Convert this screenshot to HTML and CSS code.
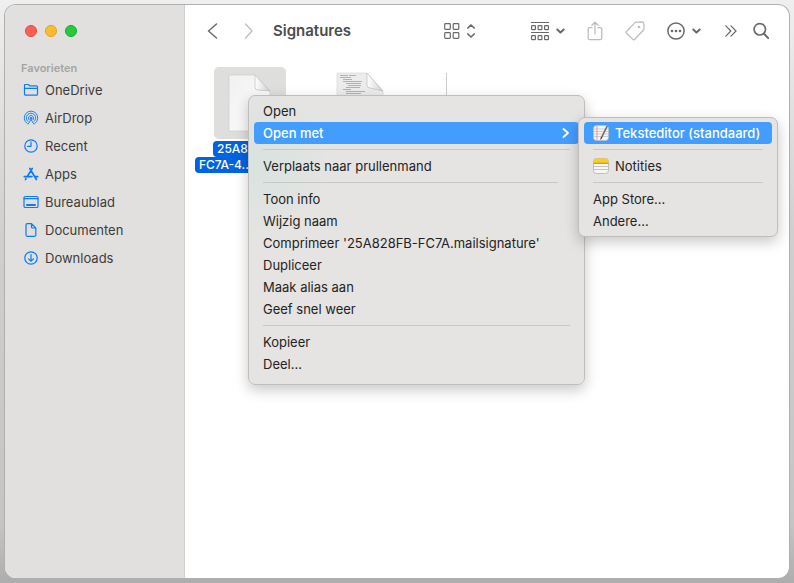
FILE: index.html
```html
<!DOCTYPE html>
<html lang="nl">
<head>
    <meta charset="UTF-8">
    <meta name="viewport" content="width=device-width, initial-scale=1.0">
    <title>Signatures</title>
    <link rel="stylesheet" href="styles.css">
</head>
<body>
    <div class="window">
        <aside class="sidebar">
            <div class="traffic-lights">
                <button class="light close" aria-label="Sluit"></button>
                <button class="light minimize" aria-label="Minimaliseer"></button>
                <button class="light zoom" aria-label="Vergroot"></button>
            </div>
            <h2 class="sidebar-title">Favorieten</h2>
            <nav class="sidebar-list">
                <a class="sidebar-item" href="#onedrive">
                    <svg class="sidebar-icon" viewBox="0 0 16 16"><path d="M1.5 12.2V3.5q0-1 1-1h3l1.2 1.3h6.8q1 0 1 1v7.4q0 1-1 1h-11q-1 0-1-1zM1.5 6.3h13"/></svg>
                    OneDrive
                </a>
                <a class="sidebar-item" href="#airdrop">
                    <svg class="sidebar-icon thin" viewBox="0 0 16 16"><path d="M4.2 13.6A6.8 6.8 0 1 1 11.8 13.600M4.900 11.500A4.700 4.700 0 1 1 11.100 11.500M6 9.800A2.600 2.600 0 1 1 10 9.800"/><circle class="solid" cx="8" cy="8.200" r=".8"/><path d="M8 9.500l-2.800 4.500M8 9.500l2.800 4.500"/></svg>
                    AirDrop
                </a>
                <a class="sidebar-item" href="#recent">
                    <svg class="sidebar-icon" viewBox="0 0 16 16"><circle cx="8" cy="8" r="6.2"/><path d="M8 3.8V8.3H4.6"/></svg>
                    Recent
                </a>
                <a class="sidebar-item" href="#apps">
                    <svg class="sidebar-icon bold" viewBox="0 0 16 16"><path d="M9.2 2.5L4.2 10.6M6.8 2.5l6.6 11M1.3 10.6h7.6M11.8 10.6h2.9M3 12.7l-.5.9"/></svg>
                    Apps
                </a>
                <a class="sidebar-item" href="#bureaublad">
                    <svg class="sidebar-icon" viewBox="0 0 16 16"><rect x="1" y="2.5" width="14" height="11" rx="1.3"/><path d="M1 4.7h14"/><path class="thick" d="M4 11h8"/></svg>
                    Bureaublad
                </a>
                <a class="sidebar-item" href="#documenten">
                    <svg class="sidebar-icon" viewBox="0 0 16 16"><path d="M8.5 1.7H4.2q-1.2 0-1.2 1.2v10.2q0 1.2 1.2 1.2h7.4q1.2 0 1.2-1.2V6zM8.5 1.7V5q0 1 1 1h3.3"/></svg>
                    Documenten
                </a>
                <a class="sidebar-item" href="#downloads">
                    <svg class="sidebar-icon" viewBox="0 0 16 16"><circle cx="8" cy="8" r="6.2"/><path d="M8 4.5v6.6M5.6 8.9L8 11.2l2.4-2.3"/></svg>
                    Downloads
                </a>
            </nav>
        </aside>

        <main class="content">
            <header class="toolbar">
                <button class="tool" aria-label="Vorige">
                    <svg width="12" height="18" viewBox="0 0 12 18"><path d="M9.5 2L1.5 9l8 7"/></svg>
                </button>
                <button class="tool next dim" aria-label="Volgende">
                    <svg width="12" height="18" viewBox="0 0 12 18"><path d="M2.500 2l6.500 7-6.500 7"/></svg>
                </button>
                <h1 class="title">Signatures</h1>
                <div class="tools">
                    <button class="tool view" aria-label="Weergave">
                        <svg width="16" height="18" viewBox="0 0 16 18"><g class="fine"><rect x=".7" y="1.7" width="5.6" height="5.6" rx=".8"/><rect x="9.2" y="1.7" width="5.6" height="5.6" rx=".8"/><rect x=".7" y="10.7" width="5.6" height="5.6" rx=".8"/><rect x="9.2" y="10.7" width="5.6" height="5.6" rx=".8"/></g></svg>
                        <svg width="8" height="18" viewBox="0 0 8 18"><path class="medium" d="M.8 6L4 3l3.2 3M.8 12L4 15l3.2-3"/></svg>
                    </button>
                    <button class="tool" aria-label="Groepeer">
                        <svg width="18" height="20" viewBox="0 0 18 20"><g class="fine"><path d="M0 1.5h18M0 11.5h18"/><rect x=".6" y="4.6" width="3.8" height="4" rx=".7"/><rect x="7.1" y="4.6" width="3.8" height="4" rx=".7"/><rect x="13.6" y="4.6" width="3.8" height="4" rx=".7"/><rect x=".6" y="14.6" width="3.8" height="4" rx=".7"/><rect x="7.1" y="14.6" width="3.8" height="4" rx=".7"/><rect x="13.6" y="14.6" width="3.8" height="4" rx=".7"/></g></svg>
                        <svg width="9" height="8" viewBox="0 0 9 8"><path class="strong" d="M1.3 2.5l3.2 3 3.2-3"/></svg>
                    </button>
                    <button class="tool dim" aria-label="Deel">
                        <svg width="16" height="20" viewBox="0 0 16 20"><path d="M5 6.7H2.7q-1.5 0-1.5 1.5v9q0 1.5 1.5 1.5h10.6q1.5 0 1.5-1.5v-9q0-1.5-1.5-1.5H11M8 13V1.3M4.9 4.3L8 1.2l3.1 3.1"/></svg>
                    </button>
                    <button class="tool dim" aria-label="Tags">
                        <svg width="20" height="20" viewBox="0 0 20 20"><path d="M11.2 1.2L17 .9q1.8 0 1.9 1.8l.1 5q0 .9-.7 1.6l-8.5 9q-1 1.1-2 .1L1.7 12.3q-1.1-1.1 0-2.1L9.8 1.9q.6-.7 1.4-.7z"/><circle cx="14" cy="6" r=".7"/></svg>
                    </button>
                    <button class="tool" aria-label="Acties">
                        <svg width="18" height="18" viewBox="0 0 18 18"><circle cx="9" cy="9" r="8.1"/><g class="dots"><circle cx="5" cy="9" r="1.3"/><circle cx="9" cy="9" r="1.3"/><circle cx="13" cy="9" r="1.3"/></g></svg>
                        <svg width="9" height="8" viewBox="0 0 9 8"><path class="strong" d="M1.3 2.5l3.2 3 3.2-3"/></svg>
                    </button>
                    <button class="tool more" aria-label="Meer">
                        <svg width="12" height="12" viewBox="0 0 12 12"><path class="fine" d="M.8.8L5.8 6l-5 5.2M6 .8L11 6l-5 5.2"/></svg>
                    </button>
                    <button class="tool" aria-label="Zoek">
                        <svg width="16" height="18" viewBox="0 0 16 18"><circle class="medium" cx="6.8" cy="7.3" r="5.7"/><path class="strong" d="M11 11.7l4.2 4.4"/></svg>
                    </button>
                </div>
            </header>

            <div class="files">
                <div class="file selected">
                    <div class="thumb">
                        <svg width="44" height="60" viewBox="0 0 44 60">
                            <defs>
                                <linearGradient id="page" x2="1" y2="1"><stop offset="0" stop-color="#f1f1f1"/><stop offset="1" stop-color="#fdfdfd"/></linearGradient>
                                <linearGradient id="fold" x2="1"><stop offset="0" stop-color="#fff"/><stop offset="1" stop-color="#d0d0d0"/></linearGradient>
                            </defs>
                            <path fill="url(#page)" stroke="#c8c8c8" stroke-width=".6" d="M1 2h26l15 16v40H1z"/>
                            <path fill="url(#fold)" stroke="#bdbdbd" stroke-width=".7" d="M27 2v12q0 3 3 3l12 1z"/>
                        </svg>
                    </div>
                    <div class="label">
                        <span class="line">25A828</span>
                        <span class="line wide">FC7A-4...</span>
                    </div>
                </div>
                <div class="file">
                    <div class="thumb">
                        <svg width="48" height="64" viewBox="0 0 48 64">
                            <path fill="#ececec" stroke="#d4d4d4" stroke-width=".6" d="M1 2h30l16 18v42H1z"/>
                            <g stroke="#a2a2a2" stroke-width=".8">
                                <path d="M4 4.5h8m1 0h7M4 6.5h11M7 8.5h9M7 10.5h19M10 12.5h15M12 14.5h13M10 16.5h14M7 18.5h8M10 20.5h19M10 22.5h15"/>
                            </g>
                            <path fill="url(#fold)" stroke="#bdbdbd" stroke-width=".7" d="M31 2v12q0 3 3 3l13 3z"/>
                        </svg>
                    </div>
                </div>
                <div class="file">
                    <div class="thumb">
                        <svg width="48" height="64" viewBox="0 0 48 64"><path stroke="#ccc" d="M.5 2v60"/></svg>
                    </div>
                </div>
            </div>
        </main>
    </div>

    <!-- contextmenu -->
    <ul class="menu context-menu">
        <li><button class="menu-item">Open</button></li>
        <li class="has-submenu">
            <button class="menu-item active">Open met
                <svg class="arrow" width="8" height="12" viewBox="0 0 8 12"><path d="M1.5 2L6 6l-4.500 4"/></svg>
            </button>
            <ul class="menu submenu">
                <li><button class="menu-item active">
                    <svg class="app-icon" viewBox="0 0 16 16"><rect x=".5" y=".5" width="15" height="15" rx="3" fill="#f5f5f5" stroke="#bbb" stroke-width=".6"/><path d="M1 4h14M1 6.5h14M1 9h14M1 11.5h14" stroke="#b5b5b5" stroke-width=".6"/><path d="M4 1v14" stroke="#f08078" stroke-width=".8"/><path d="M14.200 1L8.300 13" stroke="#6a6a6a" stroke-width="1.6"/><path d="M8.5 12.200L7.700 14.500" stroke="#222"/></svg>
                    Teksteditor (standaard)
                </button></li>
                <li class="separator"></li>
                <li><button class="menu-item">
                    <svg class="app-icon" viewBox="0 0 16 16"><rect x=".5" y=".5" width="15" height="15" rx="3" fill="#f6f6f4" stroke="#aaa" stroke-width=".7"/><path d="M.5 5V3.5q0-3 3-3h9q3 0 3 3V5z" fill="#fbcb26"/><path d="M.5 5.3h15" stroke="#b98a0c"/><path d="M1 8.5h14M1 11.5h14" stroke="#b5b5bb" stroke-width=".8"/></svg>
                    Notities
                </button></li>
                <li class="separator"></li>
                <li><button class="menu-item">App Store...</button></li>
                <li><button class="menu-item">Andere...</button></li>
            </ul>
        </li>
        <li class="separator"></li>
        <li><button class="menu-item">Verplaats naar prullenmand</button></li>
        <li class="separator short"></li>
        <li><button class="menu-item">Toon info</button></li>
        <li><button class="menu-item">Wijzig naam</button></li>
        <li><button class="menu-item">Comprimeer '25A828FB-FC7A.mailsignature'</button></li>
        <li><button class="menu-item">Dupliceer</button></li>
        <li><button class="menu-item">Maak alias aan</button></li>
        <li><button class="menu-item">Geef snel weer</button></li>
        <li class="separator"></li>
        <li><button class="menu-item">Kopieer</button></li>
        <li><button class="menu-item">Deel...</button></li>
    </ul>
</body>
</html>
```
FILE: styles.css
```css
* {
    margin: 0;
    padding: 0;
    box-sizing: border-box;
}

body {
    position: relative;
    display: flex;
    min-height: 100vh;
    padding: 5px;
    font-family: Inter, "Liberation Sans", sans-serif;
    font-size: 13px;
    line-height: 16px;
    color: #232323;
    background: linear-gradient(#efefef 0%, #cfcfcf 40%, #c4c4c4 90%, #adadad 100%);
}

button {
    font: inherit;
    color: inherit;
    background: none;
    border: none;
}

.window {
    display: flex;
    flex: 1;
    overflow: hidden;
    background: white;
    border-radius: 11px;
    box-shadow: 0 0 0 1px #b0b0b0;
}

/* zijbalk */
.sidebar {
    width: 180px;
    flex-shrink: 0;
    padding: 20px 8px;
    background: #e1e0de;
    border-right: 1px solid #d0cfcd;
}

.traffic-lights {
    display: flex;
    gap: 8px;
    padding-left: 12px;
}

.light {
    width: 12px;
    height: 12px;
    border-radius: 50%;
}

.close {
    background: #ff5f57;
    border: 1px solid #e2463f;
}

.minimize {
    background: #febc2e;
    border: 1px solid #e1a116;
}

.zoom {
    background: #28c840;
    border: 1px solid #12ac28;
}

.sidebar-title {
    margin-top: 23px;
    padding-left: 8px;
    font-size: 11px;
    font-weight: 600;
    color: #a5a4a2;
}

.sidebar-item {
    display: flex;
    align-items: center;
    gap: 6px;
    height: 28px;
    padding-left: 10px;
    color: #3c3c3b;
    text-decoration: none;
}

.sidebar-icon {
    width: 16px;
    height: 16px;
    fill: none;
    stroke: #0a7aff;
    stroke-width: 1.2;
    stroke-linecap: round;
    stroke-linejoin: round;
}

.sidebar-icon.thin {
    stroke-width: 0.9;
}

.sidebar-icon.bold {
    stroke-width: 1.7;
}

.sidebar-icon .thick {
    stroke-width: 2;
}

.sidebar-icon .solid {
    fill: #0a7aff;
}

/* knoppenbalk */
.content {
    flex: 1;
    min-width: 0;
}

.toolbar {
    display: flex;
    align-items: center;
    height: 52px;
    padding: 0 20px 0 22px;
}

.title {
    margin-left: 18px;
    font-size: 15px;
    font-weight: 600;
    line-height: 20px;
    color: #4c4c4c;
}

.tools {
    display: flex;
    align-items: center;
    gap: 22px;
    margin-left: auto;
}

.tool {
    display: flex;
    align-items: center;
    gap: 7px;
}

.tool svg {
    fill: none;
    stroke: #6a6a6a;
    stroke-width: 1.5;
    stroke-linecap: round;
    stroke-linejoin: round;
}

.tool.dim svg {
    stroke: #bdbdbd;
    stroke-width: 1.3;
}

.tool .fine {
    stroke-width: 1.2;
}

.tool .medium {
    stroke-width: 1.7;
}

.tool .strong {
    stroke-width: 2;
}

.tool .dots {
    fill: #6a6a6a;
    stroke: none;
}

.next {
    margin-left: 24px;
}

.view {
    margin-right: 34px;
}

.more {
    margin: 0 -6px 0 2px;
}

/* bestanden */
.files {
    display: grid;
    grid-template-columns: repeat(auto-fill, 110px);
    padding: 10px;
}

.file {
    display: flex;
    flex-direction: column;
    align-items: center;
}

.thumb {
    display: flex;
    align-items: center;
    justify-content: center;
    width: 72px;
    height: 72px;
    border-radius: 5px;
}

.thumb svg {
    fill: none;
}

.selected .thumb {
    background: #dededd;
}

.label {
    display: flex;
    flex-direction: column;
    align-items: center;
    margin-top: 2px;
    font-size: 12px;
    font-weight: 500;
    white-space: nowrap;
}

.line {
    width: 74px;
    padding: 0 4px;
    border-radius: 4px;
}

.line.wide {
    width: 110px;
}

.selected .line {
    color: white;
    background: #0063e1;
}

/* menu's */
.menu {
    position: absolute;
    padding: 4px 5px;
    list-style: none;
    background: #e5e4e2;
    border: 1px solid #bfbebd;
    border-radius: 7px;
    box-shadow: 0 5px 14px rgba(0, 0, 0, 0.22);
}

.context-menu {
    top: 95px;
    left: 248px;
    width: 337px;
    padding-bottom: 9px;
    background: radial-gradient(circle at 10px 65px, #d8e3df 0, #e5e4e2 75px);
}

.has-submenu {
    position: relative;
}

.submenu {
    top: -5px;
    left: 324px;
    width: 200px;
}

.menu-item {
    display: flex;
    align-items: center;
    width: 100%;
    height: 22px;
    padding: 0 9px;
    border-radius: 4px;
    white-space: nowrap;
}

.menu-item.active {
    color: white;
    font-weight: 500;
    background: #439dfe;
}

.separator {
    height: 1px;
    margin: 5px 9px;
    background: #c9c8c7;
}

.separator.short {
    margin-right: 21px;
}

.arrow {
    margin-left: auto;
    fill: none;
    stroke: white;
    stroke-width: 1.8;
    stroke-linecap: round;
    stroke-linejoin: round;
}

.app-icon {
    width: 16px;
    height: 16px;
    margin-right: 6px;
    fill: none;
}
```
